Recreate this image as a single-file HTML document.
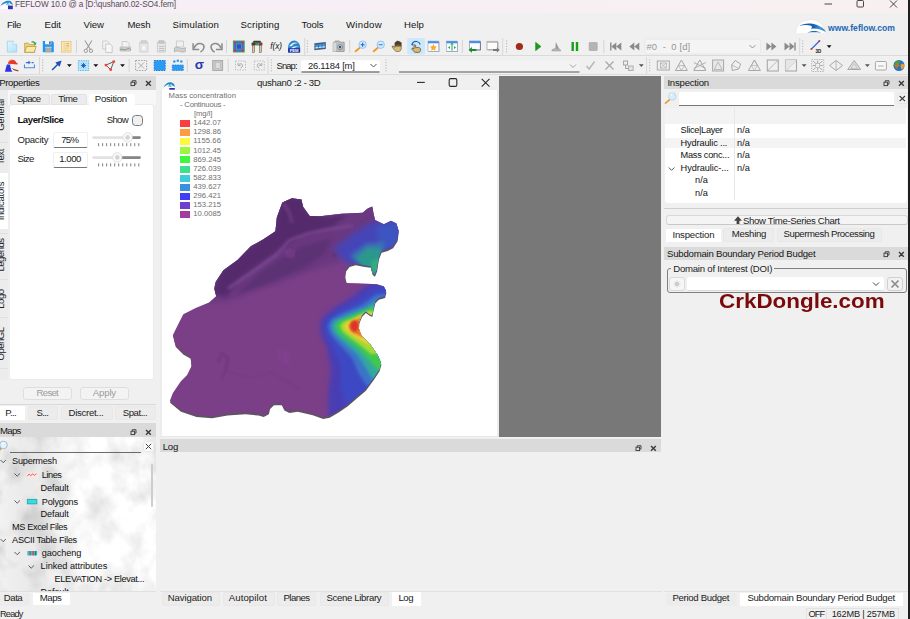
<!DOCTYPE html>
<html>
<head>
<meta charset="utf-8">
<title>FEFLOW</title>
<style>
html,body{margin:0;padding:0;}
body{width:910px;height:619px;overflow:hidden;background:#f0f0f0;font-family:"Liberation Sans",sans-serif;font-size:9px;color:#1a1a1a;position:relative;}
.abs{position:absolute;}
.t{position:absolute;white-space:nowrap;line-height:1;}
#titlebar{left:0;top:0;width:910px;height:13.6px;background:linear-gradient(90deg,#f7eef8,#f8f0f0);}
#menubar{left:0;top:13px;width:910px;height:24px;background:#f0f0f0;}
.menu{font-size:9.6px;top:19.5px;color:#111;}
.docktitle{background:#dadada;height:13px;}
.dt{font-size:8.6px;color:#111;}
.tab{position:absolute;background:#ececec;border:1px solid #e2e2e2;box-sizing:border-box;border-radius:2px;}
.tabsel{position:absolute;background:#fff;}
.tt{font-size:8.8px;color:#222;}
.tree{font-size:8.4px;color:#111;}
.leg{color:#707070;}
.sw{position:absolute;width:9.6px;height:7px;left:180.2px;}
.vt{transform:translate(-50%,-50%) rotate(-90deg);transform-origin:center;}
</style>
</head>
<body>
<!-- TITLE BAR -->
<div id="titlebar" class="abs"></div>
<div id="menubar" class="abs"></div>
<div class="t " style="letter-spacing:-0.099px;left:15.0px;top:1.00px;font-size:8.2px;color:#505050;">FEFLOW 10.0 @ a [D:\qushan0.02-SO4.fem]</div>
<div class="t " style="letter-spacing:-0.367px;left:7.0px;top:20.00px;font-size:9.6px;color:#151515;">File</div>
<div class="t " style="letter-spacing:-0.012px;left:44.5px;top:20.00px;font-size:9.6px;color:#151515;">Edit</div>
<div class="t " style="letter-spacing:-0.031px;left:83.5px;top:20.00px;font-size:9.6px;color:#151515;">View</div>
<div class="t " style="letter-spacing:-0.117px;left:127.5px;top:20.00px;font-size:9.6px;color:#151515;">Mesh</div>
<div class="t " style="letter-spacing:0.170px;left:172.5px;top:20.00px;font-size:9.6px;color:#151515;">Simulation</div>
<div class="t " style="letter-spacing:0.186px;left:240.5px;top:20.00px;font-size:9.6px;color:#151515;">Scripting</div>
<div class="t " style="letter-spacing:-0.081px;left:301.5px;top:20.00px;font-size:9.6px;color:#151515;">Tools</div>
<div class="t " style="letter-spacing:0.312px;left:346.0px;top:20.00px;font-size:9.6px;color:#151515;">Window</div>
<div class="t " style="letter-spacing:0.066px;left:404.0px;top:20.00px;font-size:9.6px;color:#151515;">Help</div>

<!-- TOOLBARS -->
<div class="abs" style="left:0;top:55px;width:910px;height:1px;background:#dadada;"></div>
<div class="abs" style="left:0;top:74px;width:910px;height:1px;background:#dcdcdc;"></div>
<svg class="abs" style="left:0;top:0;" width="910" height="76" viewBox="0 0 910 76" font-family="Liberation Sans,sans-serif">
<g transform="translate(11.9 46.5)"><defs><linearGradient id="nd" x1="0" y1="0" x2="1" y2="1"><stop offset="0" stop-color="#e4f5fd"/><stop offset="1" stop-color="#b4e0f8"/></linearGradient></defs><path d="M-4.600 -5.300h5.800l3.600 3.400v7.500h-9.400z" fill="url(#nd)" stroke="#9ad2ee" stroke-width="0.800"/><path d="M1.200 -5.300v3.400h3.600" fill="#f2fafe" stroke="#9ad2ee" stroke-width="0.600"/></g>
<g transform="translate(30.2 46.5)"><path d="M-5.500 -3.300h3.800l1 1.400h5.200v7.700h-10z" fill="#f0d47c" stroke="#b8923a" stroke-width="0.700"/><path d="M-5.500 5.800l2-5.800h9.500l-2 5.800z" fill="#faeaa8" stroke="#b8923a" stroke-width="0.700"/><path d="M1 -4.800c1.800-1 3.400-.4 4.200 1l1-.5l-.5 2.700l-2.500-.9l.9-.5c-.6-.9-1.700-1.300-3-1z" fill="#3aa848"/></g>
<g transform="translate(48.3 46.5)"><path d="M-5.500 -5.500h9.600l1.400 1.400v9.900h-11z" fill="#2196f0"/><rect x="-3.200" y="-5.500" width="6.200" height="3.300" fill="#f4f8fc"/><rect x="1" y="-5" width="1.300" height="2.300" fill="#333"/><rect x="-3" y="0.300" width="6.200" height="5.500" fill="#ababab"/><rect x="-3" y="0.300" width="6.200" height="1.200" fill="#c8c8c8"/></g>
<g transform="translate(66.2 46.5)"><rect x="-4.700" y="-5" width="9.500" height="10.600" fill="#f9ebb8" stroke="#e2c47a" stroke-width="0.800"/><path d="M-3 -2.800h6M-3 -0.600h6M-3 1.600h6M-3 3.800h6" stroke="#e6c680" stroke-width="0.900"/><path d="M0.500 -2.800h2.500M0.500 -0.600h2.500" stroke="#e8a080" stroke-width="0.900"/></g>
<path d="M76.5 40.0v13" stroke="#d4d4d4" stroke-width="1"/>
<g transform="translate(88.4 46.5)"><path d="M-3.500 -6l5.500 9M3.500 -6l-5.500 9" stroke="#9c9c9c" stroke-width="1.100" fill="none"/><circle cx="-2.600" cy="4.300" r="1.700" fill="none" stroke="#9c9c9c" stroke-width="1"/><circle cx="2.600" cy="4.300" r="1.700" fill="none" stroke="#9c9c9c" stroke-width="1"/></g>
<g transform="translate(107.2 46.5)"><path d="M-4.500 -5.500h4.500l2 2v6h-6.500z" fill="#f2f2f2" stroke="#c4c4c4" stroke-width="0.8"/><path d="M-1.500 -2.500h4.500l2 2v6.500h-6.500z" fill="#f6f6f6" stroke="#c0c0c0" stroke-width="0.8"/></g>
<g transform="translate(125.1 46.5)"><path d="M-3 -5h5l2 2v4h-7z" fill="#f2f2f2" stroke="#c4c4c4" stroke-width="0.8"/><path d="M-5 0.500h10.500v4h-10.500z" fill="#d0d0d0" stroke="#b4b4b4" stroke-width="0.7"/><path d="M-5 3c2-1.500 4 1.500 6 0s3-1 4.500 0" stroke="#909090" stroke-width="1" fill="none"/></g>
<g transform="translate(143.8 46.5)"><path d="M-4 -4.500h8v10h-8z" fill="#ececec" stroke="#c8c8c8" stroke-width="0.8"/><path d="M-2.500 -5.800h5v2.600h-5z" fill="#d8d8d8" stroke="#bcbcbc" stroke-width="0.6"/><path d="M-2 -1h4v5h-4z" fill="#f8f8f8" stroke="#d4d4d4" stroke-width="0.5"/></g>
<g transform="translate(161.4 46.5)"><path d="M-4 -4.500h8v10h-8z" fill="#e8e8e8" stroke="#c4c4c4" stroke-width="0.8"/><path d="M-2.500 -5.800h5v2.600h-5z" fill="#c8c8c8" stroke="#b0b0b0" stroke-width="0.6"/><path d="M-2.500 0h5.500M-2.500 2h5.500M-2.500 4h5.500" stroke="#b8b8b8" stroke-width="0.8"/></g>
<g transform="translate(179.9 46.5)"><path d="M-3.500 -5.500h7v6h-7z" fill="#f0f0f0" stroke="#c4c4c4" stroke-width="0.8"/><path d="M-5.500 1.500c1.500-1.500 3-1 5.500 0s4 .5 5.500-.500v4c-2 1-4 .5-5.500 0s-4-1-5.500.5z" fill="#cfcfcf" stroke="#a8a8a8" stroke-width="0.700"/></g>
<g transform="translate(198.3 46.5)"><path d="M-5.200 -3.200V2.900H0.900" stroke="#8a8a8a" stroke-width="1.500" fill="none"/><path d="M-4.300 2C-3 -1.500 -0.500 -3.200 1.800 -3C4.500 -2.800 6 -1 5.700 1C5.400 3 4 4.600 2.200 5.500" stroke="#8a8a8a" stroke-width="1.600" fill="none"/></g>
<g transform="translate(216.8 46.5)"><path d="M5.200 -3.200V2.900H-0.900" stroke="#8a8a8a" stroke-width="1.500" fill="none"/><path d="M4.300 2C3 -1.500 0.500 -3.200 -1.800 -3C-4.500 -2.800 -6 -1 -5.700 1C-5.400 3 -4 4.600 -2.200 5.500" stroke="#8a8a8a" stroke-width="1.600" fill="none"/></g>
<path d="M226.5 40.0v13" stroke="#d4d4d4" stroke-width="1"/>
<g transform="translate(238.7 46.5)"><rect x="-5.300" y="-5.500" width="10.800" height="11" fill="#4464e4" stroke="#3cb050" stroke-width="1"/><rect x="-2.400" y="-2.600" width="5" height="5.200" fill="#3450c8" stroke="#50c068" stroke-width="0.600"/><circle cx="-3.900" cy="-4.100" r="1.200" fill="#e83030"/><circle cx="4.100" cy="-4.100" r="1.200" fill="#e83030"/><circle cx="-3.900" cy="4.100" r="1.200" fill="#e83030"/><circle cx="4.100" cy="4.100" r="1.200" fill="#e83030"/></g>
<g transform="translate(256.9 46.5)"><path d="M-4.500 -3.800l1.300-2h6.600l1.300 2z" fill="#3a3a3a"/><rect x="-5.300" y="-3.800" width="10.800" height="2.600" fill="#4a3a30"/><rect x="-4.300" y="-1.200" width="1.800" height="7" fill="#dccba0" stroke="#4a4030" stroke-width="0.500"/><rect x="2.600" y="-1.200" width="1.800" height="7" fill="#dccba0" stroke="#4a4030" stroke-width="0.500"/><rect x="-1.600" y="-3.400" width="2.400" height="1.800" fill="#28b040"/><rect x="0.800" y="-3.400" width="1.600" height="1.800" fill="#30b8c8"/><rect x="3.200" y="-3.600" width="1.800" height="1.800" fill="#d03030"/></g>
<text x="276.2" y="49.3" font-size="8.800" font-style="italic" text-anchor="middle" fill="#111" font-family="Liberation Sans,sans-serif" textLength="11.800" lengthAdjust="spacingAndGlyphs">f(x)</text>
<g transform="translate(294.1 46.5)"><path d="M-6 6v-5c0-4 3-7 6-7s6 3 6 7v5z" fill="#2a84cc"/><path d="M-5 0c2-3.500 6-5 9.500-3c-3-.5-5.500 .5-6.500 2.500zM-3 2c2-2.500 5-3 8-1.500c-2.500-.2-4.500 .3-5.500 1.800z" fill="#e4f0fa"/><rect x="-6" y="1.800" width="12" height="4.200" fill="#1a2ca0"/><text x="0" y="5.400" font-size="4.200" font-weight="bold" text-anchor="middle" fill="#fff">FEM</text></g>
<path d="M304.7 38.0v17" stroke="#d8d8d8" stroke-width="1"/>
<path d="M307.3 40.5v12" stroke="#aaaaaa" stroke-width="1" stroke-dasharray="1 1.700"/>
<g transform="translate(320.1 46.5)"><path d="M-5.700 -3.300l11.400-1.300v7l-11.400 1.300z" fill="#4c5c7c"/><path d="M-4.600 -1.800l2.700-.3v3.800l-2.700.3zM-1.200 -2.200l2.700-.3v3.800l-2.700.3zM2.200 -2.600l2.500-.3v3.800l-2.500.3z" fill="#2e9cf4"/><path d="M-4.600 0.800l2.700-.3v1.200l-2.700.3zM-1.200 0.400l2.700-.3v1.200l-2.700.3zM2.200 0l2.500-.3v1.200l-2.500.3z" fill="#d8ecfc"/></g>
<g transform="translate(338.7 46.5)"><path d="M-5.500 -3.800l2.200-1.700h4l1 1.200h3.800v9.300h-11z" fill="#bcbcbc" stroke="#8a8a8a" stroke-width="0.700"/><path d="M-5.500 -3.800h3v8.800h-3z" fill="#d8d8d8"/><circle cx="1.300" cy="0.600" r="2.500" fill="#dcdcdc" stroke="#707070" stroke-width="0.700"/><circle cx="1.300" cy="0.600" r="1.300" fill="#2a5888"/></g>
<path d="M349.7 40.0v13" stroke="#d4d4d4" stroke-width="1"/>
<g transform="translate(360.6 46.5)"><path d="M-0.800 1.200l-4.200 3.600" stroke="#ee9a30" stroke-width="1.900" stroke-linecap="round"/><circle cx="2" cy="-1.800" r="3.700" fill="#d4eafc" stroke="#8cc0f0" stroke-width="0.900"/><path d="M0 -1.800h4M2 -3.800v4" stroke="#2468d8" stroke-width="1.100"/></g>
<g transform="translate(378.7 46.5)"><path d="M-0.800 1.200l-4.200 3.600" stroke="#ee9a30" stroke-width="1.900" stroke-linecap="round"/><circle cx="2" cy="-1.800" r="3.700" fill="#d4eafc" stroke="#8cc0f0" stroke-width="0.900"/><path d="M0 -1.800h4" stroke="#3a80e0" stroke-width="1.100"/></g>
<g transform="translate(397.7 46.5)"><defs><linearGradient id="hg" x1="0" y1="0" x2="0" y2="1"><stop offset="0" stop-color="#2a241c"/><stop offset="0.45" stop-color="#6a5838"/><stop offset="0.6" stop-color="#d8b872"/><stop offset="1" stop-color="#dcc080"/></linearGradient></defs><path d="M-2.800 0.800v-4.300a.8 .8 0 0 1 1.600 0v-1.300a.8 .8 0 0 1 1.600 0v.4a.8 .8 0 0 1 1.600 0v.9a.8 .8 0 0 1 1.600 0v5.400c0 1.800-1.300 3.100-3.100 3.100h-1.300c-1.300 0-2.200-.9-3.100-2.200l-1.600-2.200c-.4-.9 .7-1.600 1.300-.9z" fill="url(#hg)" stroke="#3a3020" stroke-width="0.500"/></g>
<rect x="407.200" y="38" width="17.800" height="16.500" fill="#cce8fb" rx="1.500"/>
<g transform="translate(416.0 46.5)"><path d="M-3.800 -1.800c0-2.300 2.400-3.600 4.600-3.200c1.700 .3 3 1.300 3.400 3" stroke="#2a5cc0" stroke-width="1.200" fill="none"/><path d="M-5 -2.800l1.200 2.100l1.800-1.400z" fill="#2a5cc0"/><path d="M-2 2.300v-3.300a.8 .8 0 0 1 1.600 0v1.900h2.700c1.400 0 2.300 .9 2.300 2.300v.4c0 1.400-.9 2.300-2.300 2.300h-2.300c-1.100 0-1.800-.4-2.500-1.400l-1.600-1.800c-.4-.8 .5-1.400 1.200-.9z" fill="#d8b872" stroke="#3a3020" stroke-width="0.600"/></g>
<g transform="translate(433.4 46.5)"><rect x="-4.800" y="-4.600" width="10.800" height="10" fill="#9a9a9a"/><rect x="-5.400" y="-5.400" width="10.800" height="10.200" fill="#fcfcfc" stroke="#8aa4cc" stroke-width="0.600"/><rect x="-5.400" y="-5.400" width="10.800" height="2.200" fill="#4a90e8"/><path d="M0 -2.600l1.100 2.300l2.500.3l-1.800 1.700l.5 2.500l-2.300-1.200l-2.300 1.200l.5-2.500l-1.800-1.700l2.500-.3z" fill="#fca828"/></g>
<g transform="translate(452.0 46.5)"><rect x="-5" y="-4.600" width="11" height="10" fill="#9a9a9a"/><rect x="-5.600" y="-5.400" width="11" height="10.200" fill="#f8fafc" stroke="#8aa4cc" stroke-width="0.600"/><rect x="-5.600" y="-5.400" width="11" height="2.200" fill="#4a90e8"/><path d="M0 -2.800v7" stroke="#28a848" stroke-width="1"/><path d="M0 -4l1.600 2h-3.200zM-4 1l2-1.600v3.200zM4 1l-2-1.600v3.200z" fill="#28a848"/></g>
<path d="M462.3 40.0v13" stroke="#d4d4d4" stroke-width="1"/>
<g transform="translate(474.6 46.5)"><rect x="-4.400" y="-4.800" width="10.600" height="8.600" fill="#3a3a3a"/><rect x="-5" y="-5.500" width="10.600" height="8.800" fill="#fafcff" stroke="#6a88b4" stroke-width="0.600"/><rect x="-5" y="-5.500" width="10.600" height="2.200" fill="#4a90e8"/><path d="M-6 3.400l3.300-2.900v1.900h4.500v2h-4.500v1.900z" fill="#1a8a30"/></g>
<g transform="translate(493.0 46.5)"><rect x="-5.300" y="-4.600" width="10.600" height="8.400" fill="#8a8a8a"/><rect x="-6" y="-5.200" width="10.600" height="8.400" fill="#fcfcfc" stroke="#9a9a9a" stroke-width="0.700"/><rect x="-6" y="-5.200" width="10.600" height="1.500" fill="#b8b8b8"/><path d="M6.800 3.500l-3-2.600v1.700h-3.800v1.800h3.800v1.700z" fill="#787878"/></g>
<path d="M502.7 38.0v17" stroke="#d8d8d8" stroke-width="1"/>
<path d="M506.6 40.5v12" stroke="#aaaaaa" stroke-width="1" stroke-dasharray="1 1.700"/>
<g transform="translate(519.4 46.5)"><circle r="3.600" fill="#a02c18"/></g>
<g transform="translate(537.9 46.5)"><path d="M-2.300 -4.200l5.400 4.200l-5.400 4.200z" fill="#18a018" stroke="#0c7c0c" stroke-width="0.500"/></g>
<g transform="translate(556.3 46.5)"><path d="M-0.500 -4.500l3.500 7h-4z" fill="#9a9a9a"/><path d="M-4.500 4.500c0-2 2.500-2.500 4.500-2.500s4.500 .5 4.500 2.500z" fill="#b4b4b4" stroke="#9a9a9a" stroke-width="0.500"/></g>
<g transform="translate(574.8 46.5)"><rect x="-3.300" y="-4.500" width="2.400" height="9" fill="#18a018"/><rect x="1" y="-4.500" width="2.400" height="9" fill="#18a018"/></g>
<g transform="translate(593.2 46.5)"><rect x="-4" y="-4" width="8" height="8" fill="#b4b4b4" stroke="#a0a0a0" stroke-width="0.600" rx="0.600"/></g>
<path d="M603.8 40.0v13" stroke="#d4d4d4" stroke-width="1"/>
<g transform="translate(615.8 46.5)"><path d="M-5 -4v8" stroke="#8a8a8a" stroke-width="1.400"/><path d="M0.500 -4v8l-5-4zM5.500 -4v8l-5-4z" fill="#8a8a8a"/></g>
<g transform="translate(634.3 46.5)"><path d="M0 -4v8l-5-4zM5 -4v8l-5-4z" fill="#8a8a8a"/></g>
<rect x="644.800" y="39" width="115.700" height="15" rx="2.500" fill="#f4f4f4" stroke="#e6e6e6" stroke-width="0.800"/>
<text x="646.500" y="49.6" font-size="9.400" fill="#949494" xml:space="preserve" textLength="43.600" lengthAdjust="spacing">#0  -  0 [d]</text>
<path d="M749.500 45l3 3l3-3" stroke="#8a8a8a" stroke-width="0.900" fill="none"/>
<g transform="translate(771.4 46.5)"><path d="M-5 -4v8l5-4zM0 -4v8l5-4z" fill="#8a8a8a"/></g>
<g transform="translate(790.0 46.5)"><path d="M5 -4v8" stroke="#8a8a8a" stroke-width="1.400"/><path d="M-5.500 -4v8l5-4zM-0.500 -4v8l5-4z" fill="#8a8a8a"/></g>
<path d="M799.7 38.0v17" stroke="#d8d8d8" stroke-width="1"/>
<path d="M802.7 40.5v12" stroke="#aaaaaa" stroke-width="1" stroke-dasharray="1 1.700"/>
<g transform="translate(815.9 46.5)"><path d="M-4.500 2.500l8-8" stroke="#2a6ad0" stroke-width="1.200"/><circle cx="-4.500" cy="2.500" r="1" fill="#e03030"/><circle cx="3.500" cy="-5.500" r="1" fill="#e03030"/><text x="2.500" y="6.500" font-size="4.500" font-weight="bold" text-anchor="middle" fill="#111">3D</text></g>
<path d="M826.7 45.3h4.8l-2.4 2.8z" fill="#111"/>
<g transform="translate(11.4 65.5)"><path d="M-6.500 6.300l2-7.300h4.500l1.500 4l-2 1l1.500 2.300z" fill="#2a34e0"/><path d="M-3.500 -1.800c.3-2.600 2-4 4-4c2.300 0 3.800 1.200 4.500 3l1.500 .9l-.6 .9l-5.400-.6z" fill="#e8382c"/><path d="M-2.500 -4c1-1.200 2.300-1.600 3.400-1.500" stroke="#f8a040" stroke-width="0.900" fill="none"/><path d="M-1.500 -1.300l3.600 .4l-.6 3.600l-2.200 -.3z" fill="#f6f0ea"/><path d="M1.500 3.800l5.500 1.600" stroke="#a8481c" stroke-width="1.200"/><path d="M-0.500 2.400l2.400 2.800" stroke="#fff" stroke-width="1"/></g>
<g transform="translate(29.4 65.5)"><path d="M-4.900 -1v3.300h9.900v-3.300" stroke="#4a8ee8" stroke-width="1.100" fill="none"/><path d="M-3.600 -3.500h2.600v-1.400l2.400 2l-2.400 2v-1.400h-2.600zM4.200 -3.500h-2v1.200h2z" fill="#3a6ad8"/></g>
<path d="M39.5 57.0v17" stroke="#d8d8d8" stroke-width="1"/>
<path d="M42.7 59.5v12" stroke="#aaaaaa" stroke-width="1" stroke-dasharray="1 1.700"/>
<g transform="translate(56.6 65.5)"><path d="M-4.500 4.500l6-6" stroke="#1a50b8" stroke-width="1.500"/><path d="M5 -5l-2 6.300l-4.300-4.300z" fill="#1a50b8"/></g>
<path d="M67.0 64.3h4.8l-2.4 2.8z" fill="#111"/>
<g transform="translate(83.5 65.5)"><rect x="-5.200" y="-4.800" width="10.400" height="9.800" fill="#b4e6f8" stroke="#58b0e8" stroke-width="0.900" stroke-dasharray="1.500 1"/><path d="M-1.800 -1.800l3.600 3.600M1.800 -1.800l-3.600 3.600M0 -2.600v5.200M-2.600 0h5.200" stroke="#1a58c8" stroke-width="0.900"/></g>
<path d="M93.4 64.3h4.8l-2.4 2.8z" fill="#111"/>
<g transform="translate(110.0 65.5)"><path d="M-4.100 -0.400l7.900-3.500l-3.100 8.100z" fill="none" stroke="#3a3a3a" stroke-width="0.800"/><circle cx="-4.100" cy="-0.400" r="1.400" fill="#f8402c"/><circle cx="3.800" cy="-3.900" r="1.400" fill="#f8402c"/><circle cx="0.700" cy="4.200" r="1.400" fill="#f8402c"/></g>
<path d="M120.1 64.3h4.8l-2.4 2.8z" fill="#111"/>
<path d="M129.2 59.0v13" stroke="#d4d4d4" stroke-width="1"/>
<g transform="translate(141.1 65.5)"><rect x="-5.500" y="-5" width="11" height="10" fill="none" stroke="#9a9a9a" stroke-width="0.900" stroke-dasharray="1.500 1.200"/><path d="M-3 -3l6 6M3 -3l-6 6" stroke="#a8a8a8" stroke-width="0.900"/></g>
<g transform="translate(159.7 65.5)"><rect x="-5.500" y="-5" width="11" height="10" fill="#2a9cf4" stroke="#1a78d8" stroke-width="1" stroke-dasharray="1.600 1"/></g>
<g transform="translate(177.8 65.5)"><path d="M-5.500 -0.500h11v5.500h-11z" fill="#2a9cf4" stroke="#1a78d8" stroke-width="0.800" stroke-dasharray="1.500 1"/><circle cx="-3.500" cy="-4" r="1.300" fill="#2a9cf4"/><circle cx="0" cy="-4.800" r="1.300" fill="#2a9cf4"/><circle cx="3.500" cy="-4" r="1.300" fill="#2a9cf4"/></g>
<path d="M187.3 59.0v13" stroke="#d4d4d4" stroke-width="1"/>
<text x="199.400" y="69.3" font-size="13.500" font-weight="bold" text-anchor="middle" fill="#2a3cb0">σ</text>
<g transform="translate(217.7 65.5)"><rect x="-5" y="-5" width="10" height="10" fill="#c8c8c8" stroke="#a0a0a0" stroke-width="0.800"/><rect x="-2.500" y="-3" width="5" height="6" fill="#dcdcdc" stroke="#b0b0b0" stroke-width="0.500"/></g>
<path d="M228.2 59.0v13" stroke="#d4d4d4" stroke-width="1"/>
<g transform="translate(240.5 65.5)"><rect x="-5" y="-4.500" width="10" height="9" fill="none" stroke="#b0b0b0" stroke-width="0.800" stroke-dasharray="1.400 1.200"/><path d="M-1.500 -1c2-1.500 4-.5 3.500 1.500c-.3 1-1 1.800-2 2" stroke="#a0a0a0" stroke-width="0.900" fill="none"/><path d="M-2.500 -2.500v2.500h2.500" stroke="#a0a0a0" stroke-width="0.900" fill="none"/></g>
<g transform="translate(259.3 65.5)"><rect x="-5" y="-4.500" width="10" height="9" fill="none" stroke="#b0b0b0" stroke-width="0.800" stroke-dasharray="1.400 1.200"/><path d="M1.500 -1c-2-1.500-4-.5-3.500 1.500c.3 1 1 1.800 2 2" stroke="#a0a0a0" stroke-width="0.900" fill="none"/><path d="M2.500 -2.500v2.500h-2.500" stroke="#a0a0a0" stroke-width="0.900" fill="none"/></g>
<path d="M268.0 57.0v17" stroke="#d8d8d8" stroke-width="1"/>
<path d="M271.3 59.5v12" stroke="#aaaaaa" stroke-width="1" stroke-dasharray="1 1.700"/>
<text x="276.500" y="69.0" font-size="9.400" fill="#222" textLength="21" lengthAdjust="spacing">Snap:</text>
<rect x="301" y="60.300" width="79" height="11.700" rx="2" fill="#fff"/><path d="M301.500 72h78" stroke="#7c7c7c" stroke-width="1.400"/>
<text x="307.900" y="69.0" font-size="9.400" fill="#222" textLength="46.900" lengthAdjust="spacing">26.1184 [m]</text>
<path d="M370.500 64l3 3l3-3" stroke="#444" stroke-width="0.900" fill="none"/>
<path d="M386.0 59.5v12" stroke="#aaaaaa" stroke-width="1" stroke-dasharray="1 1.700"/>
<rect x="398.400" y="60.300" width="181.600" height="11.700" rx="2.500" fill="#f3f3f3" stroke="#ececec" stroke-width="0.500"/><path d="M399 72h180.500" stroke="#8a8a8a" stroke-width="1.400"/>
<path d="M570 64.500l3 3l3-3" stroke="#9a9a9a" stroke-width="0.900" fill="none"/>
<g transform="translate(590.6 65.5)"><path d="M-4 0.500l2.500 3l5.500-7.500" stroke="#b8b8b8" stroke-width="1.500" fill="none"/></g>
<g transform="translate(609.5 65.5)"><path d="M-4 -4l8 8M4 -4l-8 8" stroke="#a8a8a8" stroke-width="1.300"/></g>
<g transform="translate(628.1 65.5)"><rect x="-4.500" y="-4.500" width="4" height="4" fill="none" stroke="#9a9a9a" stroke-width="0.900"/><path d="M-2.500 -0.500v3.500h3" stroke="#9a9a9a" stroke-width="0.900" fill="none"/><rect x="0.500" y="0.500" width="4.500" height="4.500" fill="#e4e4e4" stroke="#a8a8a8" stroke-width="0.900"/></g>
<path d="M638.9 64.3h4.8l-2.4 2.8z" fill="#555"/>
<path d="M646.6 57.0v17" stroke="#d8d8d8" stroke-width="1"/>
<path d="M649.7 59.5v12" stroke="#aaaaaa" stroke-width="1" stroke-dasharray="1 1.700"/>
<g transform="translate(663.3 65.5)"><rect x="-6" y="-4.500" width="12" height="9" fill="none" stroke="#a8a8a8" stroke-width="1"/><rect x="-3" y="-2.500" width="6" height="5" fill="none" stroke="#a8a8a8" stroke-width="0.700"/><path d="M-3 -2.500l6 5M3 -2.500l-6 5" stroke="#a8a8a8" stroke-width="0.600"/></g>
<g transform="translate(681.4 65.5)"><path d="M0 -5.500l6 10.500h-12z" fill="none" stroke="#a8a8a8" stroke-width="1"/><path d="M-3 0h6l-3 5z" fill="none" stroke="#a8a8a8" stroke-width="0.700"/></g>
<g transform="translate(699.8 65.5)"><path d="M0 -5.500l6 10.500h-12z" fill="none" stroke="#a8a8a8" stroke-width="1"/><path d="M-6 -3l12 6M6 -3l-12 6" stroke="#a8a8a8" stroke-width="0.900"/></g>
<g transform="translate(718.1 65.5)"><rect x="-5.500" y="-5.500" width="11" height="11" fill="#e8e8e8" stroke="#a8a8a8" stroke-width="1"/><path d="M0 -3.500l4 7.500h-8z" fill="none" stroke="#a8a8a8" stroke-width="0.700"/></g>
<g transform="translate(736.2 65.5)"><path d="M-1 -5l5.500 3.500l-2 5l-6.500 1.500l-.5-5.500z" fill="none" stroke="#a8a8a8" stroke-width="1"/><path d="M-4.500 -0.500l7 3.500" stroke="#a8a8a8" stroke-width="0.700"/></g>
<g transform="translate(754.4 65.5)"><path d="M0 -5.500l6 10.500h-12z" fill="none" stroke="#a8a8a8" stroke-width="1"/><path d="M-3 0h6l-3 5zM-3 0l3 -5.500l3 5.500" fill="none" stroke="#a8a8a8" stroke-width="0.600"/></g>
<g transform="translate(772.8 65.5)"><rect x="-5.500" y="-5.500" width="11" height="11" fill="none" stroke="#a8a8a8" stroke-width="1.100"/><path d="M-5.500 5.500l11-11" stroke="#a8a8a8" stroke-width="0.800"/></g>
<g transform="translate(791.0 65.5)"><rect x="-5.500" y="-5.500" width="11" height="11" fill="none" stroke="#a8a8a8" stroke-width="1.100"/><path d="M-5.500 5.500l11-11" stroke="#a8a8a8" stroke-width="0.800"/><path d="M-5.500 -5.500h11l-11 11z" fill="#e6e6e6"/></g>
<path d="M801.7 64.3h4.8l-2.4 2.8z" fill="#555"/>
<g transform="translate(817.7 65.5)"><rect x="-6" y="-6" width="12" height="12" fill="none" stroke="#a8a8a8" stroke-width="0.800" stroke-dasharray="1.400 1"/><rect x="-2" y="-2" width="4" height="4" fill="none" stroke="#a8a8a8" stroke-width="0.700"/><path d="M-4.500 -4.500l2 2M4.500 -4.500l-2 2M-4.500 4.500l2-2M4.500 4.500l-2-2M0 -5v2.500M0 5v-2.500M-5 0h2.500M5 0h-2.500" stroke="#909090" stroke-width="0.800"/></g>
<g transform="translate(836.1 65.5)"><path d="M0 -5l6.500 5l-6.500 5l-6.500-5z" fill="none" stroke="#a8a8a8" stroke-width="1"/><path d="M0 -5v10" stroke="#a8a8a8" stroke-width="0.800"/></g>
<g transform="translate(854.2 65.5)"><path d="M0 -5l6.500 9h-13z" fill="#e4e4e4" stroke="#a8a8a8" stroke-width="1"/><path d="M0 -2l3.500 5h-7z" fill="none" stroke="#a8a8a8" stroke-width="0.600"/></g>
<path d="M865.0 64.3h4.8l-2.4 2.8z" fill="#555"/>
<g transform="translate(880.9 65.5)"><rect x="-5.500" y="-4" width="11" height="8.500" rx="1" fill="#f8f8f8" stroke="#a8a8a8" stroke-width="1"/><path d="M-3 0.500h6" stroke="#a8a8a8" stroke-width="0.900"/></g>
<g transform="translate(899.0 65.5)"><circle r="5.500" fill="#2a70c8"/><path d="M-4 -3c2-2 4-2 5-1c-1 1.500 0 2.500-1.500 3.500s-1 3-2 4c-1.500-1-2.500-4-1.500-6.500z" fill="#38a838"/><path d="M2 -1.500c1.500-.5 3 0 3.500 1.500c-.5 2-1.500 3.500-3 4c-.5-1.500-1.500-3.500-.5-5.500z" fill="#e8a020"/><path d="M-5.500 0h5l-2-2.500M-0.500 0l-2 2.500" stroke="#e86820" stroke-width="1.200" fill="none"/></g>
<!-- window controls -->
<g stroke="#333" stroke-width="0.900" fill="none"><path d="M824.500 4h7.500"/><rect x="857" y="0.500" width="6.500" height="6.500" rx="1"/><path d="M890 0.500l7 7M897 0.500l-7 7"/></g>
<!-- title icon -->
<path d="M0 9C0 4 2.500 0 6.500 0C10.500 0 12.500 4 12.500 9Z" fill="#fdfafd"/>
<path d="M0.500 6C2 2.500 5.500 0 9.500 0.800C11.500 1.300 12.800 3.200 12.800 5.500C11.500 4 10 3.400 8.500 3.600L9.800 5.800C8.500 5 7.300 4.800 6 5.100L7.500 2.700C5.500 3 3 4.200 0.500 6Z" fill="#2090c8"/>
<path d="M6 5.100L9.500 1.900L10.500 4.900Z" fill="#c8e4f2" opacity="0.700"/>
<rect x="8" y="5.600" width="4.800" height="3.600" fill="#2a34b4"/>
<!-- feflow logo -->
<defs><linearGradient id="lg1" x1="0" x2="1"><stop offset="0" stop-color="#1a58a8"/><stop offset="0.55" stop-color="#1660b0"/><stop offset="0.8" stop-color="#4a9ad8"/><stop offset="1" stop-color="#1a80b8"/></linearGradient></defs>
<path d="M795.500 33C795.500 24.500 803 19.500 811 19.500C819 19.500 825.200 26 825.700 33Z" fill="#fff"/>
<path d="M795.500 33C795.500 24.500 803 19.500 811 19.500C819 19.500 825.200 26 825.700 33" fill="none" stroke="#e2e2e2" stroke-width="0.700"/>
<path d="M799.300 25.900C803 23.400 810 22.300 816.500 24.800C821 26.600 824.600 28.800 825.800 31.900C822 30 818 28.700 814 28.500L811 28.800C812.200 27.300 812.200 26.200 811 25.700C807 24.600 803 25 799.300 25.900Z" fill="url(#lg1)"/>
<path d="M807.400 32.700C811 30.500 817 30.500 821 32.700C817 32.100 811 32.100 807.400 32.700Z" fill="#1a6cb8"/>
<text x="828" y="30.700" font-size="9.600" font-weight="bold" fill="#1c68b4" textLength="67" lengthAdjust="spacingAndGlyphs">www.feflow.com</text>
</svg>
<!-- LEFT DOCK: Properties -->
<div class="abs docktitle" style="left:0;top:76px;width:156px;height:13.5px;"></div>
<div class="t dt" style="letter-spacing:-0.343px;left:-0.8px;top:78.00px;font-size:9.6px;color:#151515;">Properties</div>
<svg class="abs" style="left:130px;top:79.3px;" width="22" height="8" viewBox="0 0 22 8"><g fill="none" stroke="#3a3a3a"><rect x="1.000" y="3.200" width="3.600" height="3.400" stroke-width="0.900"/><path d="M2.300 3.200v-1.500h3.700v3.400h-1.400" stroke-width="0.900"/><path d="M16 2l4.800 4.800M20.800 2l-4.800 4.800" stroke-width="1.400"/></g></svg>
<div class="abs" style="left:0;top:90px;width:7.5px;height:290px;background:#ececec;"></div>
<div class="abs" style="left:0;top:172.5px;width:7.5px;height:56px;background:#fff;"></div>
<div class="abs" style="left:0;top:141.5px;width:7.5px;height:1px;background:#e0e0e0;"></div>
<div class="abs" style="left:0;top:233px;width:7.5px;height:1px;background:#e0e0e0;"></div>
<div class="abs" style="left:0;top:279px;width:7.5px;height:1px;background:#e0e0e0;"></div>
<div class="abs" style="left:0;top:317px;width:7.5px;height:1px;background:#e0e0e0;"></div>
<div class="abs" style="left:0;top:368px;width:7.5px;height:1px;background:#e0e0e0;"></div>
<div class="abs" style="left:-10px;top:90px;width:17.5px;height:292px;overflow:hidden;">
<div class="t tt vt" style="letter-spacing:-0.377px;left:11.2px;top:24.599999999999994px;font-size:9.6px;">General</div>
<div class="t tt vt" style="letter-spacing:-0.477px;left:11.2px;top:66.5px;font-size:9.6px;">Text</div>
<div class="t tt vt" style="letter-spacing:-0.289px;left:11.2px;top:110.69999999999999px;font-size:9.6px;">Indicators</div>
<div class="t tt vt" style="letter-spacing:-0.545px;left:11.2px;top:165.4px;font-size:9.6px;">Legends</div>
<div class="t tt vt" style="letter-spacing:-0.461px;left:11.2px;top:208.89999999999998px;font-size:9.6px;">Logo</div>
<div class="t tt vt" style="letter-spacing:-0.547px;left:11.2px;top:253.60000000000002px;font-size:9.6px;">OpenGL</div>
</div>
<div class="abs" style="left:8px;top:90px;width:147.500px;height:15px;background:#f7f7f7;"></div>
<div class="abs" style="left:9px;top:104.300px;width:145px;height:276px;background:#fff;border-radius:3px;border:1px solid #ececec;box-sizing:border-box;"></div>
<div class="tab" style="left:10px;top:94px;width:39.5px;height:11px;"></div>
<div class="tab" style="left:51px;top:94px;width:35.5px;height:11px;"></div>
<div class="tabsel" style="left:89px;top:93.5px;width:45.5px;height:12px;"></div>
<div class="t tt" style="letter-spacing:-0.721px;left:16.9px;top:94.00px;font-size:9.6px;">Space</div>
<div class="t tt" style="letter-spacing:-0.442px;left:58.3px;top:94.00px;font-size:9.6px;">Time</div>
<div class="t tt" style="letter-spacing:-0.255px;left:94.8px;top:94.00px;font-size:9.6px;">Position</div>
<div class="t tt" style="letter-spacing:-0.416px;left:17.4px;top:115.00px;font-size:9.6px;color:#111;font-weight:bold;">Layer/Slice</div>
<div class="t tt" style="letter-spacing:-0.675px;left:106.7px;top:115.00px;font-size:9.6px;">Show</div>
<div class="abs" style="left:132px;top:114.5px;width:11px;height:11px;border:1px solid #7a7a7a;border-radius:3.500px;background:#f1f1f1;box-sizing:border-box;"></div>
<div class="t tt" style="letter-spacing:-0.219px;left:17.4px;top:135.00px;font-size:9.6px;">Opacity</div>
<div class="abs" style="left:53px;top:132px;width:35px;height:15.7px;border-bottom:1.3px solid #777;box-sizing:border-box;background:#fff;border-top:1px solid #f0f0f0;border-left:1px solid #f0f0f0;border-right:1px solid #f0f0f0;border-radius:2px;"></div>
<div class="t tt" style="letter-spacing:-0.768px;left:61.3px;top:135.00px;font-size:9.6px;">75%</div>
<div class="t tt" style="letter-spacing:-0.568px;left:17.4px;top:154.00px;font-size:9.6px;">Size</div>
<div class="abs" style="left:53px;top:152.1px;width:35px;height:15.7px;border-bottom:1.3px solid #777;box-sizing:border-box;background:#fff;border-top:1px solid #f0f0f0;border-left:1px solid #f0f0f0;border-right:1px solid #f0f0f0;border-radius:2px;"></div>
<div class="t tt" style="letter-spacing:-0.463px;left:59.2px;top:154.00px;font-size:9.6px;">1.000</div>
<svg class="abs" style="left:90px;top:130px;" width="54" height="40" viewBox="0 0 54 40"><g fill="none">
<path d="M3.500 7.600h46" stroke="#e2e2e2" stroke-width="2.600" stroke-linecap="round"/>
<path d="M41 7.600h8.500" stroke="#868686" stroke-width="2.600" stroke-linecap="round"/>
<circle cx="37.600" cy="7.400" r="4.700" fill="#fafafa" stroke="#d8d8d8" stroke-width="0.800"/><circle cx="37.600" cy="7.400" r="2.300" fill="#d4d4d4"/>
<path d="M8.60 13.2v3M12.62 13.2v3M16.64 13.2v3M20.66 13.2v3M24.68 13.2v3M28.70 13.2v3M32.72 13.2v3M36.74 13.2v3M40.76 13.2v3M44.78 13.2v3M48.80 13.2v3" stroke="#707070" stroke-width="0.900"/>
<path d="M3.500 27.600h46" stroke="#e2e2e2" stroke-width="2.600" stroke-linecap="round"/>
<path d="M31 27.600h18.500" stroke="#868686" stroke-width="2.600" stroke-linecap="round"/>
<circle cx="27.300" cy="27.400" r="4.700" fill="#fafafa" stroke="#d8d8d8" stroke-width="0.800"/><circle cx="27.300" cy="27.400" r="2.300" fill="#d4d4d4"/>
<path d="M8.60 33.4v3M12.62 33.4v3M16.64 33.4v3M20.66 33.4v3M24.68 33.4v3M28.70 33.4v3M32.72 33.4v3M36.74 33.4v3M40.76 33.4v3M44.78 33.4v3M48.80 33.4v3" stroke="#707070" stroke-width="0.900"/>
</g></svg>
<div class="abs" style="left:22.500px;top:386.700px;width:49.500px;height:13.500px;border:1px solid #dedede;border-radius:3px;box-sizing:border-box;background:#f3f3f3;"></div>
<div class="abs" style="left:79.500px;top:386.700px;width:49.700px;height:13.500px;border:1px solid #dedede;border-radius:3px;box-sizing:border-box;background:#f3f3f3;"></div>
<div class="t tt" style="letter-spacing:-0.733px;left:36.6px;top:388.00px;font-size:9.6px;color:#9c9c9c;">Reset</div>
<div class="t tt" style="letter-spacing:-0.160px;left:92.8px;top:388.00px;font-size:9.6px;color:#9c9c9c;">Apply</div>
<div class="abs" style="left:0;top:404.200px;width:156px;height:1px;background:#d8d8d8;"></div>
<div class="tabsel" style="left:0;top:406px;width:25px;height:13.500px;"></div>
<div class="tab" style="left:28px;top:406px;width:30px;height:13.500px;border-color:#e8e8e8;"></div>
<div class="tab" style="left:60.600px;top:406px;width:52px;height:13.500px;border-color:#e8e8e8;"></div>
<div class="tab" style="left:114.600px;top:406px;width:41.400px;height:13.500px;border-color:#e8e8e8;"></div>
<div class="t tt" style="letter-spacing:-0.568px;left:5.3px;top:408.00px;font-size:9.6px;">P...</div>
<div class="t tt" style="letter-spacing:-0.677px;left:36.6px;top:408.00px;font-size:9.6px;">S...</div>
<div class="t tt" style="letter-spacing:-0.306px;left:68.6px;top:408.00px;font-size:9.6px;">Discret...</div>
<div class="t tt" style="letter-spacing:-0.448px;left:122.7px;top:408.00px;font-size:9.6px;">Spat...</div>
<div class="abs docktitle" style="left:0;top:423px;width:155.600px;height:13.600px;"></div>
<div class="t dt" style="letter-spacing:-0.692px;left:0.0px;top:426.00px;font-size:9.6px;color:#151515;">Maps</div>
<svg class="abs" style="left:130px;top:427.5px;" width="22" height="8" viewBox="0 0 22 8"><g fill="none" stroke="#3a3a3a"><rect x="1.000" y="3.200" width="3.600" height="3.400" stroke-width="0.900"/><path d="M2.300 3.200v-1.500h3.700v3.400h-1.400" stroke-width="0.900"/><path d="M16 2l4.800 4.800M20.800 2l-4.800 4.800" stroke-width="1.400"/></g></svg>
<svg class="abs" style="left:0;top:437px;" width="156" height="154" viewBox="0 0 156 154"><defs><filter id="terr" x="0" y="0" width="100%" height="100%"><feTurbulence type="fractalNoise" baseFrequency="0.035 0.03" numOctaves="4" seed="7"/><feColorMatrix type="matrix" values="0.75 0 0 0 0.545  0.75 0 0 0 0.545  0.75 0 0 0 0.545  0 0 0 0 1"/></filter><linearGradient id="tg" x1="0" x2="1"><stop offset="0" stop-color="#000" stop-opacity="0.05"/><stop offset="0.5" stop-color="#fff" stop-opacity="0.25"/><stop offset="1" stop-color="#fff" stop-opacity="0.1"/></linearGradient></defs><rect width="156" height="154" filter="url(#terr)"/><rect width="156" height="154" fill="url(#tg)"/></svg>
<div class="abs" style="left:10px;top:451.700px;width:131px;height:1.200px;background:#6a6a6a;"></div>
<div class="abs" style="left:143px;top:440.500px;width:10.500px;height:11.500px;background:#fafafa;border:1px solid #e8e8e8;border-radius:2.500px;box-sizing:border-box;"></div>
<svg class="abs" style="left:-3px;top:439px;" width="12" height="14" viewBox="0 0 12 14"><path d="M4 9l-3 3.500" stroke="#d09a40" stroke-width="2" stroke-linecap="round"/><circle cx="6.500" cy="6" r="3.800" fill="#e4f2fc" stroke="#9fbdd2" stroke-width="1"/><path d="M4.700 5.300a2 2 0 0 1 2-1.600" stroke="#fff" stroke-width="1" fill="none"/></svg>
<svg class="abs" style="left:143.500px;top:441.500px;" width="9" height="9" viewBox="0 0 9 9"><path d="M1.800 1.800l5.400 5.400M7.200 1.800l-5.400 5.400" stroke="#444" stroke-width="1" fill="none"/></svg>
<div class="abs" style="left:151px;top:464px;width:1.600px;height:43px;background:#cdcdcd;border-radius:1px;"></div>
<div class="t tree" style="letter-spacing:-0.254px;left:12.1px;top:457.00px;font-size:9.2px;">Supermesh</div>
<div class="t tree" style="letter-spacing:-0.454px;left:41.8px;top:471.00px;font-size:9.2px;">Lines</div>
<div class="t tree" style="letter-spacing:-0.161px;left:40.6px;top:484.00px;font-size:9.2px;">Default</div>
<div class="t tree" style="letter-spacing:-0.225px;left:41.8px;top:498.00px;font-size:9.2px;">Polygons</div>
<div class="t tree" style="letter-spacing:-0.161px;left:40.6px;top:510.00px;font-size:9.2px;">Default</div>
<div class="t tree" style="letter-spacing:-0.398px;left:12.1px;top:523.00px;font-size:9.2px;">MS Excel Files</div>
<div class="t tree" style="letter-spacing:-0.335px;left:12.1px;top:536.00px;font-size:9.2px;">ASCII Table Files</div>
<div class="t tree" style="letter-spacing:-0.109px;left:41.8px;top:549.00px;font-size:9.2px;">gaocheng</div>
<div class="t tree" style="letter-spacing:-0.048px;left:40.6px;top:562.00px;font-size:9.2px;">Linked attributes</div>
<div class="t tree" style="letter-spacing:-0.329px;left:54.5px;top:575.00px;font-size:9.2px;">ELEVATION -&gt; Elevat...</div>
<div class="abs" style="left:0;top:584px;width:152px;height:6.600px;overflow:hidden;"><div class="t tree" style="letter-spacing:-0.161px;left:40.6px;top:4.00px;font-size:9.2px;">Default</div></div>
<svg class="abs" style="left:0;top:453px;" width="60" height="137" viewBox="0 0 60 137"><g fill="none" stroke="#4a4a4a" stroke-width="0.900">
<path d="M0.500 7l2.700 2.700l2.700-2.700"/><path d="M14.500 20.500l2.700 2.700l2.700-2.700"/><path d="M14.500 47.500l2.700 2.700l2.700-2.700"/><path d="M0.500 86l2.700 2.700l2.700-2.700"/><path d="M14.500 99l2.700 2.700l2.700-2.700"/><path d="M28.500 112.500l2.700 2.700l2.700-2.700"/></g>
<rect x="27" y="19.600" width="10" height="5" fill="#fde6e4"/><path d="M27.300 23.200l1.800-2.200l1.800 1.600l2-1.800l1.800 1.600l1.800-1.800" stroke="#e05048" stroke-width="0.900" fill="none"/>
<rect x="27.300" y="46.300" width="9.600" height="4.600" fill="#34dce4" stroke="#1a9aa8" stroke-width="0.700"/>
<rect x="27.300" y="98" width="9.800" height="4.400" fill="#38c0d0"/><rect x="29.300" y="98" width="1.600" height="4.400" fill="#a06868"/><rect x="32.500" y="98" width="1.600" height="4.400" fill="#c85050"/><rect x="35" y="98" width="1.200" height="4.400" fill="#2a7898"/>
</svg>
<div class="abs" style="left:0;top:590.700px;width:156px;height:1px;background:#e0e0e0;"></div>
<div class="tab" style="left:0;top:592.500px;width:30px;height:13px;border-color:#ececec"></div>
<div class="tabsel" style="left:33px;top:592.500px;width:36.500px;height:12.500px;"></div>
<div class="t tt" style="letter-spacing:-0.466px;left:3.8px;top:593.00px;font-size:9.6px;">Data</div>
<div class="t tt" style="letter-spacing:-0.442px;left:39.7px;top:593.00px;font-size:9.6px;">Maps</div>
<div class="t tt" style="letter-spacing:-0.773px;left:0.0px;top:610.00px;font-size:9.2px;">Ready</div>
<!-- CENTER MDI -->
<div class="abs" style="left:160px;top:76px;width:500.700px;height:360.500px;background:#787878;"></div>
<div class="abs" style="left:159.500px;top:76px;width:339px;height:360.500px;background:#fff;border-left:2.800px solid #ececec;border-right:2.600px solid #ececec;border-bottom:1px solid #e8e8e8;box-sizing:border-box;"></div>
<div class="abs" style="left:159.500px;top:76px;width:339px;height:14px;background:#f0f0f0;"></div>
<div class="t tt" style="letter-spacing:-0.319px;left:257.0px;top:78.00px;font-size:9.6px;color:#222;">qushan0 :2 - 3D</div>
<svg class="abs" style="left:162px;top:80px;" width="14" height="10" viewBox="0 0 14 10"><path d="M1 10C1 5 3.500 1.500 7 1.500C10.500 1.500 13 5 13 10Z" fill="#fbfbfb"/><path d="M1.500 7.500C3 4 6 1.800 9.500 2.500C11.500 3 12.800 4.800 12.800 7C11.500 5.600 10 5 8.500 5.200L9.800 7.300C8.500 6.500 7.300 6.300 6 6.600L7.500 4.300C5.500 4.500 3.500 5.800 1.500 7.500Z" fill="#1e88c0"/><path d="M6 6.600L9.500 3.500L10.500 6.500Z" fill="#bfe0f0" opacity="0.700"/><rect x="7.300" y="8" width="5.500" height="1.700" fill="#2a2cb0"/></svg>
<svg class="abs" style="left:410px;top:76px;" width="86" height="14" viewBox="0 0 86 14"><g fill="none" stroke="#2a2a2a" stroke-width="1.100"><path d="M7 6.400h7.800"/><rect x="39.200" y="2.600" width="7.600" height="7.800" rx="1.400"/><path d="M71.700 2.800l7.800 7.800M79.500 2.800l-7.800 7.800"/></g></svg>
<div class="t leg" style="letter-spacing:0.046px;left:168.5px;top:92.00px;font-size:7.7px;">Mass concentration</div>
<div class="t leg" style="letter-spacing:-0.200px;left:180.0px;top:101.00px;font-size:7.7px;">- Continuous -</div>
<div class="t leg" style="letter-spacing:-0.083px;left:194.0px;top:110.00px;font-size:7.7px;">[mg/l]</div>
<div class="sw" style="top:120.0px;background:#fb3e3e;"></div><div class="t leg" style="letter-spacing:-0.014px;left:193.3px;top:119.00px;font-size:7.7px;">1442.07</div>
<div class="sw" style="top:129.1px;background:#fc9c3e;"></div><div class="t leg" style="letter-spacing:-0.014px;left:193.3px;top:128.00px;font-size:7.7px;">1298.86</div>
<div class="sw" style="top:138.2px;background:#fcf83e;"></div><div class="t leg" style="letter-spacing:0.069px;left:193.3px;top:137.00px;font-size:7.7px;">1155.66</div>
<div class="sw" style="top:147.3px;background:#9cf83e;"></div><div class="t leg" style="letter-spacing:-0.014px;left:193.3px;top:147.00px;font-size:7.7px;">1012.45</div>
<div class="sw" style="top:156.4px;background:#3ef83e;"></div><div class="t leg" style="letter-spacing:-0.014px;left:193.3px;top:156.00px;font-size:7.7px;">869.245</div>
<div class="sw" style="top:165.5px;background:#3ee08e;"></div><div class="t leg" style="letter-spacing:-0.014px;left:193.3px;top:165.00px;font-size:7.7px;">726.039</div>
<div class="sw" style="top:174.6px;background:#3eccd6;"></div><div class="t leg" style="letter-spacing:-0.014px;left:193.3px;top:174.00px;font-size:7.7px;">582.833</div>
<div class="sw" style="top:183.7px;background:#3e8ee0;"></div><div class="t leg" style="letter-spacing:-0.014px;left:193.3px;top:183.00px;font-size:7.7px;">439.627</div>
<div class="sw" style="top:192.8px;background:#3e3ef8;"></div><div class="t leg" style="letter-spacing:-0.014px;left:193.3px;top:192.00px;font-size:7.7px;">296.421</div>
<div class="sw" style="top:201.9px;background:#6e3ecc;"></div><div class="t leg" style="letter-spacing:-0.014px;left:193.3px;top:201.00px;font-size:7.7px;">153.215</div>
<div class="sw" style="top:211.0px;background:#a03ea0;"></div><div class="t leg" style="letter-spacing:-0.014px;left:193.3px;top:210.00px;font-size:7.7px;">10.0085</div>

<svg class="abs" style="left:160px;top:190px;" width="338" height="247" viewBox="0 0 338 247">
<defs><clipPath id="mc"><path d="M77.5 70.0 L90.7 56.3 L103.0 49.5 L115.4 41.2 L116.8 27.5 L122.3 12.4 L131.9 8.2 L141.5 9.6 L142.9 16.5 L149.7 26.1 L160.0 26.3 L181.3 23.7 L202.6 22.8 L208.0 18.3 L212.4 16.5 L213.3 22.8 L215.1 29.9 L223.9 34.3 L231.0 30.8 L236.4 33.4 L238.5 40.5 L237.3 49.4 L232.8 56.5 L227.5 59.2 L221.3 61.0 L218.6 68.0 L216.8 79.6 L214.7 85.0 L212.4 83.2 L210.6 76.0 L204.4 75.2 L195.5 73.4 L189.3 75.2 L185.8 79.6 L184.9 86.7 L186.6 93.0 L197.3 93.3 L216.8 94.3 L223.9 96.5 L226.1 100.9 L224.8 106.2 L218.6 107.9 L215.1 111.5 L213.3 118.8 L212.0 125.2 L209.4 123.9 L205.6 121.3 L201.7 125.2 L199.1 131.7 L198.6 138.1 L201.7 145.9 L210.7 154.9 L217.7 165.3 L221.1 173.0 L219.3 179.5 L213.3 188.5 L205.6 198.9 L196.5 206.6 L187.5 214.4 L178.4 220.8 L169.4 226.0 L162.9 227.3 L152.5 223.4 L137.4 219.9 L129.2 221.2 L124.1 218.6 L121.5 213.4 L113.7 213.4 L109.8 217.3 L108.6 222.5 L103.4 225.1 L98.2 223.8 L85.3 222.5 L67.2 223.8 L51.7 226.4 L36.2 225.1 L20.7 219.9 L9.8 210.9 L12.9 203.1 L20.7 191.5 L27.1 185.0 L31.5 176.0 L30.5 166.9 L23.3 163.0 L15.5 155.3 L12.9 145.0 L18.1 134.6 L23.3 124.3 L36.2 117.8 L49.1 112.6 L56.3 106.2 L54.3 98.4 L55.6 92.0 L63.3 80.3Z"/></clipPath><filter id="bl1" x="-30%" y="-30%" width="160%" height="160%"><feGaussianBlur stdDeviation="1"/></filter><filter id="bl1_1" x="-30%" y="-30%" width="160%" height="160%"><feGaussianBlur stdDeviation="1.1"/></filter><filter id="bl1_2" x="-30%" y="-30%" width="160%" height="160%"><feGaussianBlur stdDeviation="1.2"/></filter><filter id="bl1_3" x="-30%" y="-30%" width="160%" height="160%"><feGaussianBlur stdDeviation="1.3"/></filter><filter id="bl1_5" x="-30%" y="-30%" width="160%" height="160%"><feGaussianBlur stdDeviation="1.5"/></filter><filter id="bl1_6" x="-30%" y="-30%" width="160%" height="160%"><feGaussianBlur stdDeviation="1.6"/></filter><filter id="bl1_8" x="-30%" y="-30%" width="160%" height="160%"><feGaussianBlur stdDeviation="1.8"/></filter><filter id="bl2" x="-30%" y="-30%" width="160%" height="160%"><feGaussianBlur stdDeviation="2"/></filter><filter id="bl2_5" x="-30%" y="-30%" width="160%" height="160%"><feGaussianBlur stdDeviation="2.5"/></filter><filter id="bl3" x="-30%" y="-30%" width="160%" height="160%"><feGaussianBlur stdDeviation="3"/></filter><filter id="bl3_5" x="-30%" y="-30%" width="160%" height="160%"><feGaussianBlur stdDeviation="3.5"/></filter></defs>
<path d="M77.5 70.0 L90.7 56.3 L103.0 49.5 L115.4 41.2 L116.8 27.5 L122.3 12.4 L131.9 8.2 L141.5 9.6 L142.9 16.5 L149.7 26.1 L160.0 26.3 L181.3 23.7 L202.6 22.8 L208.0 18.3 L212.4 16.5 L213.3 22.8 L215.1 29.9 L223.9 34.3 L231.0 30.8 L236.4 33.4 L238.5 40.5 L237.3 49.4 L232.8 56.5 L227.5 59.2 L221.3 61.0 L218.6 68.0 L216.8 79.6 L214.7 85.0 L212.4 83.2 L210.6 76.0 L204.4 75.2 L195.5 73.4 L189.3 75.2 L185.8 79.6 L184.9 86.7 L186.6 93.0 L197.3 93.3 L216.8 94.3 L223.9 96.5 L226.1 100.9 L224.8 106.2 L218.6 107.9 L215.1 111.5 L213.3 118.8 L212.0 125.2 L209.4 123.9 L205.6 121.3 L201.7 125.2 L199.1 131.7 L198.6 138.1 L201.7 145.9 L210.7 154.9 L217.7 165.3 L221.1 173.0 L219.3 179.5 L213.3 188.5 L205.6 198.9 L196.5 206.6 L187.5 214.4 L178.4 220.8 L169.4 226.0 L162.9 227.3 L152.5 223.4 L137.4 219.9 L129.2 221.2 L124.1 218.6 L121.5 213.4 L113.7 213.4 L109.8 217.3 L108.6 222.5 L103.4 225.1 L98.2 223.8 L85.3 222.5 L67.2 223.8 L51.7 226.4 L36.2 225.1 L20.7 219.9 L9.8 210.9 L12.9 203.1 L20.7 191.5 L27.1 185.0 L31.5 176.0 L30.5 166.9 L23.3 163.0 L15.5 155.3 L12.9 145.0 L18.1 134.6 L23.3 124.3 L36.2 117.8 L49.1 112.6 L56.3 106.2 L54.3 98.4 L55.6 92.0 L63.3 80.3Z" transform="translate(0.3,1.8)" fill="#5c5460"/>
<path d="M77.5 70.0 L90.7 56.3 L103.0 49.5 L115.4 41.2 L116.8 27.5 L122.3 12.4 L131.9 8.2 L141.5 9.6 L142.9 16.5 L149.7 26.1 L160.0 26.3 L181.3 23.7 L202.6 22.8 L208.0 18.3 L212.4 16.5 L213.3 22.8 L215.1 29.9 L223.9 34.3 L231.0 30.8 L236.4 33.4 L238.5 40.5 L237.3 49.4 L232.8 56.5 L227.5 59.2 L221.3 61.0 L218.6 68.0 L216.8 79.6 L214.7 85.0 L212.4 83.2 L210.6 76.0 L204.4 75.2 L195.5 73.4 L189.3 75.2 L185.8 79.6 L184.9 86.7 L186.6 93.0 L197.3 93.3 L216.8 94.3 L223.9 96.5 L226.1 100.9 L224.8 106.2 L218.6 107.9 L215.1 111.5 L213.3 118.8 L212.0 125.2 L209.4 123.9 L205.6 121.3 L201.7 125.2 L199.1 131.7 L198.6 138.1 L201.7 145.9 L210.7 154.9 L217.7 165.3 L221.1 173.0 L219.3 179.5 L213.3 188.5 L205.6 198.9 L196.5 206.6 L187.5 214.4 L178.4 220.8 L169.4 226.0 L162.9 227.3 L152.5 223.4 L137.4 219.9 L129.2 221.2 L124.1 218.6 L121.5 213.4 L113.7 213.4 L109.8 217.3 L108.6 222.5 L103.4 225.1 L98.2 223.8 L85.3 222.5 L67.2 223.8 L51.7 226.4 L36.2 225.1 L20.7 219.9 L9.8 210.9 L12.9 203.1 L20.7 191.5 L27.1 185.0 L31.5 176.0 L30.5 166.9 L23.3 163.0 L15.5 155.3 L12.9 145.0 L18.1 134.6 L23.3 124.3 L36.2 117.8 L49.1 112.6 L56.3 106.2 L54.3 98.4 L55.6 92.0 L63.3 80.3Z" fill="#7b3f88"/>
<g clip-path="url(#mc)">
 <g filter="url(#bl3)">
  <path d="M45.0 112.0 L52.0 90.0 L80.0 64.0 L112.0 40.0 L116.0 14.0 L130.0 0.0 L146.0 6.0 L152.0 20.0 L185.0 18.0 L212.0 10.0 L220.0 32.0 L192.0 54.0 L180.0 72.0 L162.0 78.0 L145.0 83.0 L116.0 94.0 L90.0 102.0 L66.0 112.0Z" fill="#6a3880" />
 </g>
 <g filter="url(#bl2)">
  <path d="M52.0 104.0 L60.0 82.0 L80.0 64.0 L102.0 48.0 L114.0 39.0 L116.0 24.0 L122.0 10.0 L132.0 6.0 L143.0 8.0 L145.0 18.0 L151.0 25.0 L170.0 27.0 L188.0 24.0 L172.0 37.0 L140.0 47.0 L125.0 57.0 L102.0 73.0 L80.0 89.0 L66.0 107.0Z" fill="#552b6c" />
  <path d="M74.0 106.0 L102.0 81.0 L125.0 66.0 L140.0 57.0 L160.0 51.0 L172.0 48.0 L164.0 64.0 L146.0 77.0 L116.0 90.0 L90.0 100.0Z" fill="#5c3074" />
 </g>
 <g filter="url(#bl1_5)">
  <path d="M69.0 98.0 L92.0 82.0 L116.0 65.0 L130.0 50.0 L150.0 43.0 L170.0 39.0 L192.0 36.0" stroke="#7e4a94" stroke-width="2.2" fill="none" stroke-linecap="round" stroke-linejoin="round"/>
  <path d="M124.0 14.0 L129.0 22.0 L132.0 32.0" stroke="#6e3e86" stroke-width="2.5" fill="none" stroke-linecap="round" stroke-linejoin="round"/>
 </g>
 <!-- upper right field -->
 <g filter="url(#bl3)">
  <path d="M173.0 59.0 L195.0 42.0 L213.0 32.0 L224.0 30.0 L242.0 28.0 L242.0 62.0 L225.0 88.0 L192.0 76.0 L185.0 72.0Z" fill="#4444b8" />
 </g>
 <g filter="url(#bl2)">
  <path d="M216.0 36.0 L240.0 32.0 L240.0 56.0 L226.0 60.0 L218.0 50.0Z" fill="#3c54c0" />
  <path d="M190.0 66.0 L206.0 54.0 L224.0 52.0 L222.0 78.0 L214.0 86.0 L198.0 74.0Z" fill="#3878b0" />
 </g>
 <g filter="url(#bl1_5)">
  <path d="M196.0 68.0 L208.0 58.0 L221.0 59.0 L219.0 78.0 L213.0 85.0 L202.0 74.0Z" fill="#2c988c" />
  <path d="M211.0 72.0 L219.0 68.0 L218.0 80.0 L213.0 85.0Z" fill="#36ac80" />
 </g>
 <!-- hot spot contours -->
 <g filter="url(#bl2_5)"><path d="M235.0 91.0 L208.0 94.0 L192.0 107.0 L174.0 118.0 L163.0 127.0 L160.0 136.0 L162.0 147.0 L167.0 157.0 L171.0 180.0 L168.0 205.0 L169.0 232.0 L235.0 232.0Z" fill="#4a3cb4" /></g>
<g filter="url(#bl2)"><path d="M235.0 96.0 L214.0 99.0 L198.0 111.0 L179.0 121.0 L167.5 128.5 L164.5 136.0 L166.5 145.5 L172.0 156.0 L181.0 175.0 L181.0 198.0 L186.0 215.0 L235.0 215.0Z" fill="#3e48c4" /></g>
<g filter="url(#bl1_8)"><path d="M235.0 102.0 L216.0 105.0 L202.0 115.0 L182.0 123.5 L171.0 129.5 L168.0 136.0 L170.5 144.0 L178.0 153.0 L192.0 168.0 L199.0 184.0 L207.0 196.0 L235.0 196.0Z" fill="#3a74c8" /></g>
<g filter="url(#bl1_6)"><path d="M235.0 108.0 L218.0 110.0 L205.0 118.0 L185.5 126.0 L174.5 130.5 L171.5 136.0 L174.0 143.0 L181.5 150.5 L197.0 164.0 L206.0 178.0 L213.0 190.0 L235.0 182.0Z" fill="#30a8a0" /></g>
<g filter="url(#bl1_5)"><path d="M235.0 114.0 L216.0 116.0 L206.0 120.0 L189.0 127.0 L178.5 131.5 L175.5 136.0 L178.0 142.5 L185.0 148.5 L200.0 160.0 L211.0 172.0 L218.0 181.0 L235.0 176.0Z" fill="#40c850" /></g>
<g filter="url(#bl1_3)"><path d="M220.0 120.0 L208.0 121.0 L193.0 128.0 L183.0 132.0 L180.0 136.0 L182.5 141.5 L188.5 146.5 L200.0 155.0 L211.0 164.0 L230.0 164.0Z" fill="#a4d838" /></g>
<g filter="url(#bl1_2)"><path d="M212.0 123.0 L206.0 123.0 L195.0 129.0 L186.5 132.5 L184.0 136.0 L186.0 140.5 L191.0 144.0 L200.0 150.0 L211.0 156.0Z" fill="#ecd030" /></g>
<g filter="url(#bl1_1)"><path d="M208.0 127.0 L200.0 128.0 L191.0 132.0 L188.5 136.0 L190.0 140.0 L193.0 143.0 L202.0 147.0 L208.0 146.0Z" fill="#ea7830" /></g>

 <ellipse cx="194.5" cy="136" rx="4.2" ry="5.8" fill="#dc3428" filter="url(#bl1)"/>
 <!-- terrain details -->
 <g filter="url(#bl1)" fill="none">
  <path d="M58.0 172.0 L62.0 163.0 L68.0 168.0 L66.0 180.0 L62.0 188.0" stroke="#69357a" stroke-width="1.6" fill="none" stroke-linecap="round" stroke-linejoin="round"/>
  <path d="M68.0 182.0 L90.0 188.0 L110.0 182.0 L125.0 190.0 L140.0 200.0" stroke="#723a82" stroke-width="1.2" fill="none" stroke-linecap="round" stroke-linejoin="round"/>
  <path d="M126 60 l2 8 M130 59 l1 9 M134 60 l-1 8" stroke="#9a4aa0" stroke-width="0.8"/>
  <path d="M119 160 l1 12 M124 162 l1 10 M128 160 l-1 14" stroke="#8e459a" stroke-width="0.9"/>
  <circle cx="174" cy="64.5" r="1.6" fill="#5a2c68"/>
 </g>
</g>
</svg>
<!-- Log dock -->
<div class="abs docktitle" style="left:160px;top:439.400px;width:500.700px;height:13px;"></div>
<div class="t dt" style="letter-spacing:-0.239px;left:162.7px;top:442.00px;font-size:9.6px;color:#151515;">Log</div>
<svg class="abs" style="left:635px;top:443.5px;" width="22" height="8" viewBox="0 0 22 8"><g fill="none" stroke="#3a3a3a"><rect x="1.000" y="3.200" width="3.600" height="3.400" stroke-width="0.900"/><path d="M2.300 3.200v-1.500h3.700v3.400h-1.400" stroke-width="0.900"/><path d="M16 2l4.800 4.800M20.800 2l-4.800 4.800" stroke-width="1.400"/></g></svg>
<div class="abs" style="left:160px;top:590.700px;width:502px;height:1px;background:#e0e0e0;"></div>
<div class="tab" style="left:161.5px;top:592.300px;width:58.1px;height:13.500px;border-color:#e8e8e8"></div>
<div class="tab" style="left:223px;top:592.300px;width:52.0px;height:13.500px;border-color:#e8e8e8"></div>
<div class="tab" style="left:277.3px;top:592.300px;width:39.2px;height:13.500px;border-color:#e8e8e8"></div>
<div class="tab" style="left:320.4px;top:592.300px;width:68.4px;height:13.500px;border-color:#e8e8e8"></div>
<div class="tabsel" style="left:391.900px;top:592.300px;width:29.300px;height:13.300px;"></div>
<div class="t tt" style="letter-spacing:-0.114px;left:167.7px;top:593.00px;font-size:9.6px;">Navigation</div>
<div class="t tt" style="letter-spacing:0.084px;left:228.8px;top:593.00px;font-size:9.6px;">Autopilot</div>
<div class="t tt" style="letter-spacing:-0.541px;left:283.5px;top:593.00px;font-size:9.6px;">Planes</div>
<div class="t tt" style="letter-spacing:-0.346px;left:326.5px;top:593.00px;font-size:9.6px;">Scene Library</div>
<div class="t tt" style="letter-spacing:-0.472px;left:398.5px;top:593.00px;font-size:9.6px;">Log</div>
<!-- RIGHT DOCK -->
<div class="abs docktitle" style="left:663.500px;top:76.100px;width:244px;height:13.400px;"></div>
<div class="t dt" style="letter-spacing:-0.223px;left:667.4px;top:78.00px;font-size:9.6px;color:#151515;">Inspection</div>
<svg class="abs" style="left:883.4px;top:78.9px;" width="22" height="8" viewBox="0 0 22 8"><g fill="none" stroke="#3a3a3a"><rect x="1.000" y="3.200" width="3.600" height="3.400" stroke-width="0.900"/><path d="M2.300 3.200v-1.500h3.700v3.400h-1.400" stroke-width="0.900"/><path d="M16 2l4.800 4.800M20.800 2l-4.800 4.800" stroke-width="1.400"/></g></svg>
<div class="abs" style="left:679px;top:92.300px;width:215px;height:13.400px;background:#fff;border-bottom:1.400px solid #777;box-sizing:border-box;border-radius:2px 2px 0 0;"></div>
<svg class="abs" style="left:664px;top:91px;" width="14" height="15" viewBox="0 0 14 15"><path d="M5.800 8.500l-4.300 3.600" stroke="#eea030" stroke-width="1.700" stroke-linecap="round"/><circle cx="8.300" cy="5.500" r="3.700" fill="#d4ecfb" stroke="#b4d4ea" stroke-width="0.900"/><path d="M6.500 4.800a2.200 2.200 0 0 1 2.200-2" stroke="#fff" stroke-width="1.100" fill="none"/></svg>
<div class="abs" style="left:896.500px;top:92.500px;width:11px;height:11.500px;border:1px solid #e6e6e6;border-radius:2px;box-sizing:border-box;background:#f4f4f4;"></div>
<svg class="abs" style="left:897.500px;top:94px;" width="9" height="9" viewBox="0 0 9 9"><path d="M1.600 2l5.400 5.200M7 2l-5.400 5.200" stroke="#3a3a3a" stroke-width="1.100" fill="none"/></svg>
<div class="abs" style="left:665px;top:107.500px;width:241.500px;height:95.600px;background:#fff;border-radius:0 0 3px 3px;"></div>
<div class="abs" style="left:665px;top:107.500px;width:241px;height:16.500px;background:#f3f3f3;"></div>
<div class="abs" style="left:665px;top:137.700px;width:241px;height:10.800px;background:#f4f4f4;"></div>
<div class="abs" style="left:734.200px;top:107.500px;width:1px;height:92.300px;background:#e8e8e8;"></div>
<div class="t tree" style="letter-spacing:-0.300px;left:680.6px;top:126.00px;font-size:9.2px;">Slice|Layer</div>
<div class="t tree" style="letter-spacing:0.140px;left:736.9px;top:126.00px;font-size:9.2px;">n/a</div>
<div class="t tree" style="letter-spacing:-0.140px;left:680.6px;top:139.00px;font-size:9.2px;">Hydraulic ...</div>
<div class="t tree" style="letter-spacing:0.140px;left:736.9px;top:139.00px;font-size:9.2px;">n/a</div>
<div class="t tree" style="letter-spacing:-0.248px;left:680.6px;top:151.00px;font-size:9.2px;">Mass conc...</div>
<div class="t tree" style="letter-spacing:0.140px;left:736.9px;top:151.00px;font-size:9.2px;">n/a</div>
<div class="t tree" style="letter-spacing:-0.070px;left:680.6px;top:164.00px;font-size:9.2px;">Hydraulic-...</div>
<div class="t tree" style="letter-spacing:0.140px;left:736.9px;top:164.00px;font-size:9.2px;">n/a</div>
<div class="t tree" style="letter-spacing:0.140px;left:694.9px;top:176.00px;font-size:9.2px;">n/a</div>
<div class="t tree" style="letter-spacing:0.140px;left:694.9px;top:189.00px;font-size:9.2px;">n/a</div>
<svg class="abs" style="left:668px;top:164.500px;" width="8" height="8" viewBox="0 0 8 8"><path d="M0.800 2.500l2.800 2.800l2.800-2.800" stroke="#444" stroke-width="0.900" fill="none"/></svg>
<div class="abs" style="left:663.500px;top:208.200px;width:244.500px;height:1px;background:#cfcfcf;"></div>
<div class="abs" style="left:665.500px;top:215.400px;width:242px;height:9.200px;border:1px solid #d8d8d8;border-bottom-color:#c8c8c8;border-radius:3px;box-sizing:border-box;background:#f4f4f4;"></div>
<div class="abs" style="left:664px;top:214px;width:244px;height:10px;overflow:hidden;"><div class="t tt" style="letter-spacing:-0.335px;left:79.0px;top:2.00px;font-size:9.6px;">Show Time-Series Chart</div><svg class="abs" style="left:68.500px;top:1.800px;" width="10" height="10" viewBox="0 0 10 10"><path d="M5 0.300l4 4.500h-2.600v4.700h-2.800v-4.700h-2.600z" fill="#444"/></svg></div>
<div class="tabsel" style="left:666px;top:228.800px;width:54.500px;height:13px;"></div>
<div class="tab" style="left:722.900px;top:228.400px;width:51.300px;height:13.300px;border-color:#e8e8e8"></div>
<div class="tab" style="left:777px;top:228.400px;width:105px;height:13.300px;border-color:#e8e8e8"></div>
<div class="t tt" style="letter-spacing:-0.173px;left:672.4px;top:230.00px;font-size:9.6px;">Inspection</div>
<div class="t tt" style="letter-spacing:-0.281px;left:731.8px;top:229.00px;font-size:9.6px;">Meshing</div>
<div class="t tt" style="letter-spacing:-0.414px;left:783.5px;top:229.00px;font-size:9.6px;">Supermesh Processing</div>
<div class="abs docktitle" style="left:663.500px;top:247px;width:244px;height:13px;"></div>
<div class="t dt" style="letter-spacing:-0.233px;left:667.1px;top:249.00px;font-size:9.6px;color:#151515;">Subdomain Boundary Period Budget</div>
<svg class="abs" style="left:883.4px;top:250.3px;" width="22" height="8" viewBox="0 0 22 8"><g fill="none" stroke="#3a3a3a"><rect x="1.000" y="3.200" width="3.600" height="3.400" stroke-width="0.900"/><path d="M2.300 3.200v-1.500h3.700v3.400h-1.400" stroke-width="0.900"/><path d="M16 2l4.800 4.800M20.800 2l-4.800 4.800" stroke-width="1.400"/></g></svg>
<div class="abs" style="left:666.500px;top:268px;width:240px;height:24.500px;border:1.100px solid #808080;border-radius:3px;box-sizing:border-box;"></div>
<div class="abs" style="left:671px;top:264px;width:103px;height:9px;background:#f0f0f0;"></div>
<div class="t tt" style="letter-spacing:-0.229px;left:673.2px;top:264.00px;font-size:9.6px;">Domain of Interest (DOI)</div>
<div class="abs" style="left:669px;top:277px;width:15.500px;height:14px;border:1px solid #dadada;border-radius:3px;box-sizing:border-box;background:#f6f6f6;"></div>
<svg class="abs" style="left:672.800px;top:280px;" width="8" height="8" viewBox="0 0 8 8"><circle cx="4" cy="4" r="2.200" fill="#cfcfcf"/><path d="M4 0.500v7M0.500 4h7M1.600 1.600l4.800 4.800M6.400 1.600l-4.800 4.800" stroke="#cacaca" stroke-width="0.700"/></svg>
<div class="abs" style="left:687.300px;top:277px;width:196.700px;height:14px;background:#fff;border-radius:2px;border-bottom:1px solid #dcdcdc;box-sizing:border-box;"></div>
<svg class="abs" style="left:872px;top:281px;" width="8" height="6" viewBox="0 0 8 6"><path d="M1 1.500l3 3l3-3" stroke="#333" stroke-width="0.900" fill="none"/></svg>
<div class="abs" style="left:887.300px;top:276.800px;width:15.500px;height:14.400px;border:1px solid #d0d0d0;border-radius:3px;box-sizing:border-box;background:#f2f2f2;"></div>
<svg class="abs" style="left:890px;top:279px;" width="10" height="10" viewBox="0 0 10 10"><path d="M1.500 1.500l7 7M8.500 1.500l-7 7" stroke="#8c8c8c" stroke-width="1.700" fill="none"/></svg>
<div class="t" style="left:718.500px;top:292.300px;font-size:19.600px;font-weight:bold;color:#7a0a0a;transform-origin:0 0;transform:scaleX(1.1442);">CrkDongle.com</div>
<div class="abs" style="left:664px;top:590.700px;width:244px;height:1px;background:#e0e0e0;"></div>
<div class="tab" style="left:666px;top:592.500px;width:71px;height:13.300px;border-color:#ececec"></div>
<div class="tabsel" style="left:740.200px;top:592.600px;width:162.400px;height:13px;"></div>
<div class="t tt" style="letter-spacing:-0.309px;left:672.4px;top:593.00px;font-size:9.6px;">Period Budget</div>
<div class="t tt" style="letter-spacing:-0.258px;left:747.4px;top:593.00px;font-size:9.6px;">Subdomain Boundary Period Budget</div>
<div class="abs" style="left:805.600px;top:608.400px;width:93px;height:1px;background:#e2e2e2;"></div>
<div class="abs" style="left:805.6px;top:608.400px;width:1px;height:11px;background:#e2e2e2;"></div>
<div class="abs" style="left:826.2px;top:608.400px;width:1px;height:11px;background:#e2e2e2;"></div>
<div class="abs" style="left:898px;top:608.400px;width:1px;height:11px;background:#e2e2e2;"></div>
<div class="t tt" style="letter-spacing:-0.825px;left:808.4px;top:610.00px;font-size:9.2px;">OFF</div>
<div class="t tt" style="letter-spacing:-0.194px;left:831.7px;top:610.00px;font-size:9.2px;">162MB | 257MB</div>
<div class="abs" style="left:908px;top:0;width:2px;height:619px;background:#1e1e1e;"></div>

</body>
</html>
